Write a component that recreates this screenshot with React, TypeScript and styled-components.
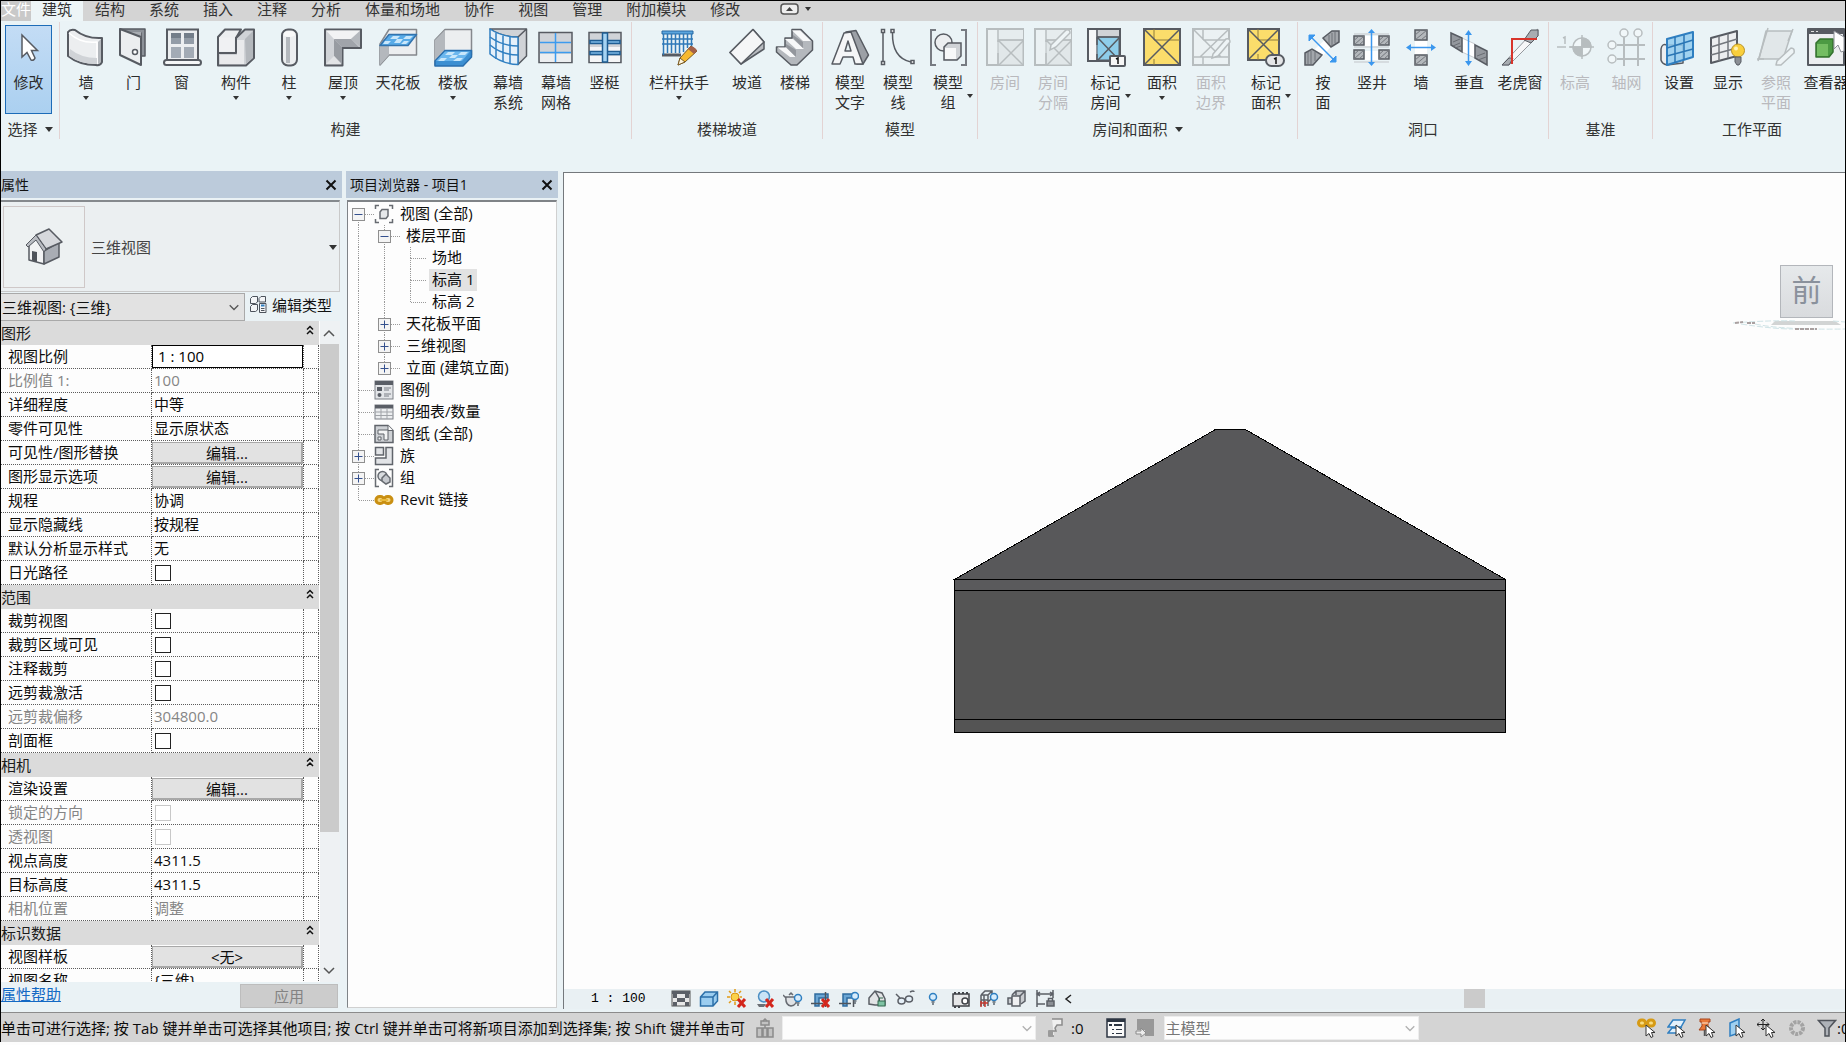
import React from "react";
import styled, { createGlobalStyle, css } from "styled-components";

const UI_FONT = `"Open Sans", "Noto Sans CJK SC", sans-serif`;

const Global = createGlobalStyle`
  *, *::before, *::after { box-sizing: border-box; }
  body { margin: 0; background: #fdfdfd; overflow: hidden; }
  body, button, input, select {
    font-family: ${UI_FONT};
    font-size: 15px;
    line-height: 20px;
  }
  button { cursor: default; white-space: nowrap; }
`;

const Frame = styled.div`
  display: flex;
  flex-direction: column;
  height: calc(100vh - 3px);
  border: 1px solid #000;
  border-bottom: 0;
  background: #eaf2f5;
  color: #1c1c1c;
  overflow: hidden;
`;

/* ---------- Tab strip ---------- */
const TabStrip = styled.nav`
  display: flex;
  flex: none;
  height: 20px;
  background: #d4d4d4;
`;

const Tab = styled.button<{ $kind?: "file" | "active" }>`
  flex: none;
  border: 0;
  padding: 0 ${(p) => (p.$kind ? 11 : 12)}px;
  background: ${(p) => (p.$kind === "active" ? "#edf5f7" : "transparent")};
  color: #333;
  line-height: 16px;
  display: flex;
  align-items: flex-start;
  ${(p) =>
    p.$kind === "file" &&
    css`
      width: 30px;
      padding: 0;
      justify-content: center;
      background: #c9c9c9;
      color: #fff;
    `}
`;

const RibbonToggle = styled.button`
  display: flex;
  align-items: center;
  gap: 6px;
  height: 16px;
  margin-left: 28px;
  padding: 0;
  border: 0;
  background: none;
`;

const Caret = styled.span<{ $size?: number; $color?: string }>`
  display: inline-block;
  width: 0;
  height: 0;
  border: ${(p) => p.$size ?? 3}px solid transparent;
  border-bottom-width: 0;
  border-top: ${(p) => (p.$size ?? 3) + 1}px solid ${(p) => p.$color ?? "#333"};
`;

/* ---------- Ribbon ---------- */
const Ribbon = styled.div`
  display: flex;
  flex: none;
  height: 150px;
  padding-top: 1px;
  background: #eaf3f6;
  overflow: hidden;
`;

const Panel = styled.section`
  display: flex;
  flex: none;
  flex-direction: column;
  height: 117px;
  border-right: 1px solid #e3d3d3;
`;

const PanelBody = styled.div`
  display: flex;
  height: 97px;
`;

const PanelTitle = styled.div`
  display: flex;
  align-items: center;
  justify-content: center;
  gap: 7px;
  height: 20px;
  color: #333;
`;

const Tool = styled.button<{ $w: number; $off?: boolean }>`
  display: flex;
  flex: none;
  flex-direction: column;
  align-items: center;
  width: ${(p) => p.$w}px;
  padding: 5px 0 0;
  border: 0;
  background: none;
  color: ${(p) => (p.$off ? "#b9b9bd" : "#2c2c2c")};
  > svg {
    flex: none;
    opacity: ${(p) => (p.$off ? 0.35 : 1)};
    filter: ${(p) => (p.$off ? "grayscale(1)" : "none")};
  }
`;

const ModifyTool = styled(Tool)`
  height: 89px;
  margin: 3px 7px 0 4px;
  padding-top: 1px;
  border: 1px solid #1d6cb8;
  background: linear-gradient(#c3dcf5, #abd0f0);
`;

const ToolLabel = styled.span`
  display: grid;
  grid-template-columns: 1fr auto 1fr;
  align-items: center;
  width: 100%;
  margin-top: 5px;
  white-space: pre;
  text-align: center;
  > i {
    grid-column: 3;
    justify-self: start;
    margin-left: 4px;
  }
  > span {
    grid-column: 2;
    justify-self: center;
  }
`;

const ToolCaret = styled(Caret)`
  margin-top: 4px;
`;

/* ---------- Workspace ---------- */
const Workspace = styled.main`
  display: flex;
  flex: 1;
  min-height: 0;
`;

const Palette = styled.aside<{ $w: number; $gap: number }>`
  display: flex;
  flex: none;
  flex-direction: column;
  width: ${(p) => p.$w}px;
  margin-right: ${(p) => p.$gap}px;
`;

const PaletteTitle = styled.header<{ $pad?: number }>`
  display: flex;
  flex: none;
  align-items: center;
  justify-content: space-between;
  height: 27px;
  margin-bottom: 2px;
  padding: 0 5px 0 ${(p) => p.$pad ?? 0}px;
  background: #bccbdb;
  font-size: 14px;
  color: #111;
`;

const CloseButton = styled.button`
  display: flex;
  padding: 0;
  border: 0;
  background: none;
`;

const TypeBox = styled.div`
  display: flex;
  flex: none;
  align-items: center;
  gap: 6px;
  height: 92px;
  margin-right: 2px;
  padding: 3px 2px 2px 2px;
  border-top: 2px solid #85898d;
  border-right: 1px solid #c9c9c9;
  border-bottom: 1px solid #c9c9c9;
  background: #ebeff1;
  color: #444;
  > span:nth-of-type(1) { flex: 1; }
`;

const TypePreview = styled.div`
  display: flex;
  align-items: center;
  justify-content: center;
  width: 82px;
  height: 82px;
  border: 1px solid #cfc8c8;
  background: #edf1f2;
`;

const InstanceRow = styled.div`
  display: flex;
  flex: none;
  align-items: center;
  gap: 5px;
  height: 29px;
`;

const SelectWrap = styled.label<{ $w: number; $h: number; $light?: boolean }>`
  position: relative;
  display: flex;
  align-items: center;
  flex: none;
  width: ${(p) => p.$w}px;
  height: ${(p) => p.$h}px;
  > svg { position: absolute; right: ${(p) => (p.$light ? 3 : 5)}px; pointer-events: none; }
`;

const Select = styled.select<{ $light?: boolean }>`
  appearance: none;
  width: 100%;
  height: 100%;
  padding: 0 24px 0 1px;
  border: 1px solid ${(p) => (p.$light ? "#ededed" : "#a9a9a9")};
  border-left-width: ${(p) => (p.$light ? 1 : 0)}px;
  border-radius: 0;
  background: ${(p) => (p.$light ? "#fdfdfd" : "#e2e2e2")};
  color: ${(p) => (p.$light ? "#777" : "#111")};
  opacity: 1;
`;

const EditType = styled.button`
  display: flex;
  align-items: center;
  gap: 5px;
  padding: 0 0 4px;
  border: 0;
  background: none;
  color: #111;
`;

const GridArea = styled.div`
  display: flex;
  flex: 1;
  min-height: 0;
  margin-right: 2px;
  overflow: hidden;
`;

const GridClip = styled.div`
  flex: 1;
  overflow: hidden;
`;

const PropTable = styled.table`
  width: 100%;
  border-collapse: separate;
  border-spacing: 0;
  table-layout: fixed;
  background: #fdfdfd;
`;

const GroupCell = styled.th`
  height: 24px;
  padding: 0;
  background: #dbdbdb;
  font-weight: 400;
  text-align: left;
  > div {
    display: flex;
    justify-content: space-between;
    padding-right: 3px;
  }
`;

const NameCell = styled.th<{ $off?: boolean }>`
  height: 24px;
  padding: 0 0 2px 7px;
  border-right: 1px dotted #5c5c5c;
  border-bottom: 1px dotted #5c5c5c;
  font-weight: 400;
  text-align: left;
  white-space: nowrap;
  color: ${(p) => (p.$off ? "#858585" : "#0c0c0c")};
`;

const ValueCell = styled.td<{ $off?: boolean; $flush?: boolean }>`
  height: 24px;
  padding: ${(p) => (p.$flush ? "0" : "0 0 2px 2px")};
  border-right: 1px dotted #5c5c5c;
  border-bottom: 1px dotted #5c5c5c;
  color: ${(p) => (p.$off ? "#858585" : "#0c0c0c")};
`;

const ScaleInput = styled.input`
  display: block;
  width: 100%;
  height: 23px;
  padding: 0 0 2px 5px;
  border: 1px solid #000;
  background: #fff;
`;

const CellButton = styled.button`
  display: block;
  width: 100%;
  height: 22px;
  margin-top: 1px;
  padding: 0;
  border: 1px solid #a8a8a8;
  border-width: 1px 2px 2px 1px;
  background: #e2e2e2;
  color: #0c0c0c;
  line-height: 18px;
`;

const Tick = styled.input`
  appearance: none;
  display: block;
  width: 16px;
  height: 16px;
  margin: 2px 1px 0;
  border: 1px solid #222;
  background: #fff;
  &:disabled { border-color: #c8c8c8; }
`;

const ScrollBar = styled.div`
  display: flex;
  flex: none;
  flex-direction: column;
  align-items: center;
  width: 21px;
  padding: 5px 2px 5px 0;
  border-left: 1px solid #fff;
  background: #eef1f3;
`;

const ScrollThumb = styled.div`
  flex: none;
  width: 19px;
  height: 75%;
  margin: 4px 0 auto;
  background: #cbcbcb;
`;

const PaletteFooter = styled.footer`
  display: flex;
  flex: none;
  align-items: flex-start;
  justify-content: space-between;
  height: 30px;
  padding: 2px 4px 0 0;
`;

const HelpLink = styled.a`
  color: #1469c4;
`;

const ApplyButton = styled.button`
  width: 98px;
  height: 24px;
  padding: 0;
  border: 1px solid #bdbdbd;
  background: #cccccc;
  color: #838383;
`;

/* ---------- Project browser ---------- */
const TreeBox = styled.ul`
  flex: 1;
  margin: 0 1px 4px;
  padding: 1px 0 0;
  border: 1px solid #d0d0d0;
  border-top: 2px solid #7f8387;
  border-left: 1px solid #7f8387;
  background: #fdfdfd;
  list-style: none;
`;

const TreeRow = styled.li`
  display: flex;
  align-items: center;
  height: 22px;
  color: #0c0c0c;
  > svg { flex: none; }
`;

const TreeLabel = styled.span<{ $sel?: boolean }>`
  height: 22px;
  margin-left: 3px;
  padding: 0 3px;
  background: ${(p) => (p.$sel ? "#e2e2e2" : "transparent")};
  white-space: nowrap;
`;

/* ---------- Drawing view ---------- */
const View = styled.section`
  display: flex;
  flex: 1;
  flex-direction: column;
  min-width: 0;
  margin: 1px 0 3px;
  border-top: 1px solid #74787c;
  border-left: 1px solid #74787c;
`;

const Canvas = styled.div`
  position: relative;
  flex: 1;
  min-height: 0;
  background: #fdfdfd;
  > svg { display: block; width: 100%; height: 100%; }
`;

const ViewCube = styled.div`
  position: absolute;
  top: 92px;
  right: 0;
  width: 112px;
  overflow: hidden;
`;

const CubeFace = styled.button`
  display: block;
  width: 53px;
  height: 53px;
  margin: 0 0 0 47px;
  padding: 0 0 4px;
  border: 1px solid #b3b6bb;
  background: linear-gradient(#e6e9eb, #d9dbde);
  color: #8a919c;
  font-size: 30px;
  line-height: 44px;
`;

const ViewBar = styled.div`
  display: flex;
  flex: none;
  align-items: center;
  gap: 8px;
  height: 20px;
  padding-left: 27px;
  background: #e9f0f3;
`;

const ScaleText = styled.button`
  width: 72px;
  padding: 0;
  border: 0;
  background: none;
  font-family: "Liberation Mono", monospace;
  font-size: 13px;
  text-align: left;
`;

const BarButton = styled.button`
  display: flex;
  flex: none;
  padding: 0;
  border: 0;
  background: none;
`;

const HTrack = styled.div`
  flex: 1;
  align-self: stretch;
`;

const HThumb = styled.div`
  width: 21px;
  height: 19px;
  margin-left: 50%;
  background: #cbcbcb;
`;

/* ---------- Status bar ---------- */
const StatusBar = styled.footer`
  display: flex;
  flex: none;
  align-items: center;
  height: 30px;
  border-top: 1px solid #8b8b8b;
  background: #d4d4d4;
  color: #0c0c0c;
  overflow: hidden;
`;

const StatusText = styled.span`
  flex: none;
  width: 754px;
  overflow: hidden;
  white-space: nowrap;
`;

const StatusGroup = styled.div<{ $ml: number; $gap: number }>`
  display: flex;
  flex: none;
  align-items: center;
  gap: ${(p) => p.$gap}px;
  margin-left: ${(p) => p.$ml}px;
`;

const StatusRight = styled.div`
  display: flex;
  flex: none;
  align-items: center;
  width: 208px;
  margin-left: auto;
  white-space: nowrap;
`;

/* ---------- Ribbon drawings, 40 × 40 ---------- */
const S = "#575b62";
const L = "#eceef0";
const M = "#d0d3d7";
const D = "#b4b8bd";
const B = "#2f7fc1";

const hatch = (x: number, y: number, w: number, h: number) => (
  <g>
    <rect x={x} y={y} width={w} height={h} fill="#b4b8bc" stroke={S} strokeWidth="1.500" />
    <path
      d={`M${x} ${y + h / 2}L${x + w / 2} ${y}M${x} ${y + h}L${x + w} ${y}M${x + w / 2} ${y + h}L${x + w} ${y + h / 2}`}
      stroke="#74787e"
      fill="none"
    />
  </g>
);

const roomPlan = (
  <g fill="none" stroke={S}>
    <rect x="2" y="2" width="36" height="36" fill={L} strokeWidth="2" />
    <path d="M13 13H38V38H13z" fill={M} />
    <path d="M2 3H38V12H14V3z" fill="#dfe1e4" stroke="none" />
    <path d="M13 2V15M13 26V38M13 13H38M14 14L38 38M38 14L14 38" strokeWidth="1.5" />
  </g>
);

const areaPlan = (x2: number) => (
  <g fill="none" stroke={S}>
    <rect x="2" y="2" width={x2 - 2} height={x2 - 2} fill="#fbdd6b" strokeWidth="2" />
    <path d={`M12 2V13M12 13H${x2}M12 ${x2 - 6}V${x2}`} stroke="#8f7d3c" />
    <path d={`M3 3L${x2 - 1} ${x2 - 1}M${x2 - 1} 3L3 ${x2 - 1}`} strokeWidth="1.5" />
  </g>
);

const greyPencil = (
  <path d="M18 18L33 3Q37 2 37 6L23 20L17 23z" fill="#f6f6f6" stroke={S} strokeWidth="1.5" />
);

const toolArt: Record<string, React.ReactNode> = {
  modify: (
    <path d="M13 8V30L18 25.500L22 33Q25 34 26 31L22.500 23.500H28.500z" fill="#fff" stroke={S} strokeWidth="1.500" />
  ),
  wall: (
    <g stroke={S} strokeWidth="2" strokeLinejoin="round">
      <path d="M2 5Q4 2 9 3Q20 12 36 11V35Q34 39 30 38Q13 38 2 29z" fill={L} />
      <path d="M3 6Q15 17 31 15V37" fill="none" stroke="#fff" strokeWidth="1.500" />
      <path d="M32 15L35 12V35L32 37z" fill={D} stroke="none" />
      <path d="M4 22Q15 31 31 31V37Q14 37 3 29z" fill={M} stroke="none" />
    </g>
  ),
  door: (
    <g stroke={S} strokeWidth="1.500" strokeLinejoin="round">
      <path d="M6 2H31V29H27V6H14z" fill="#8c9198" />
      <path d="M14 5H27V29H14z" fill="#a9adb3" stroke="none" />
      <path d="M6 2L27 10V38L6 28z" fill={L} strokeWidth="2" />
      <circle cx="21" cy="25" r="2.500" fill="#fff" />
    </g>
  ),
  window: (
    <g stroke={S}>
      <rect x="5" y="2.500" width="31" height="31" fill={L} strokeWidth="2" />
      <path d="M9 6H19V17H9zM22 6H32V17H22z" fill="#747e8a" stroke="none" />
      <path d="M9 20H19V31H9zM22 20H32V31H22z" fill="#a3abb5" stroke="none" />
      <path d="M9 11H19V17H9zM22 11H32V17H22z" fill="#939ca7" stroke="none" />
      <rect x="2" y="33" width="37" height="5" rx="2.500" fill="#f5f6f7" strokeWidth="2" />
    </g>
  ),
  component: (
    <g stroke={S} strokeWidth="2" strokeLinejoin="round">
      <path d="M2 10L9 2.500H25L20 11V26H2z" fill={L} />
      <path d="M2 26H20V11L29 2.500H38V31L30 38.500H2z" fill={M} />
      <path d="M3 10.500H18V24H3z" fill="#f0f1f3" stroke="none" />
      <path d="M29 12L37 4V31L30 37z" fill={D} stroke="none" />
      <path d="M21 13H28V37H4V28H21z" fill="#e9eaec" stroke="none" />
    </g>
  ),
  column: (
    <g>
      <rect x="13" y="2.500" width="15" height="36" rx="6" fill={L} stroke={S} strokeWidth="2" />
      <path d="M19 10V36" stroke={D} strokeWidth="4" />
      <ellipse cx="20.500" cy="7" rx="6" ry="3" fill="#f9f9f9" />
    </g>
  ),
  roof: (
    <g stroke={S} strokeWidth="2" strokeLinejoin="round">
      <path d="M2 2.500H38V21H19.500V38.500H2z" fill={M} />
      <g stroke="none">
        <path d="M3 3.500H37L28 12H11z" fill="#f2f3f4" />
        <path d="M37 4V20L28 12z" fill={D} />
        <path d="M11 12H28L36 20H19z" fill="#a0a4aa" />
        <path d="M11 12L19 20V37L11 29z" fill="#989ca2" />
        <path d="M3 37L11 29L18 37z" fill="#e2e4e6" />
      </g>
    </g>
  ),
  ceiling: (
    <g strokeLinejoin="round">
      <path d="M2 17L11 2.500H38.500V28H11L2 38z" fill={L} stroke="#85888d" strokeWidth="1.500" />
      <path d="M2 17L11 8V28L2 38z" fill={D} />
      <path d="M11 7.500H38.500L30 18.500H2z" fill="#58abe8" stroke="#3373ad" strokeWidth="1.500" />
      <path d="M15 9H22L19 12H12zM28 9H35L32 12H25zM19 12H25L22 16H16zM7 14H13L10 17H5zM26 14H31L28 17H23z" fill="#c9e7fb" />
    </g>
  ),
  floor: (
    <g strokeLinejoin="round">
      <path d="M2 13L12 2.500H38.500V28H12L2 38z" fill={L} stroke="#85888d" strokeWidth="1.500" />
      <path d="M2 13L12 3V26L2 36z" fill={D} />
      <path d="M12 23.500H38.500V30L30 39H2V34z" fill="#3c8fd2" stroke="#2a6fae" strokeWidth="1.500" />
      <path d="M12 24.500H37L29 34H3z" fill="#6cb7ee" />
      <path d="M15 25H22L19 28H12zM28 25H35L32 28H25zM19 28H25L22 31H16zM8 31H14L11 34H5zM24 31H30L27 34H20z" fill="#c9e7fb" />
    </g>
  ),
  curtainSystem: (
    <g fill="none" strokeLinejoin="round">
      <path d="M2 2H38.500V29L30 37.500V10Q14 10 2 2z" fill={M} stroke={S} strokeWidth="1.500" />
      <path d="M2 2Q14 10 30 10V37.500Q14 37 2 27z" fill="#e4f0fa" stroke={B} strokeWidth="1.500" />
      <path d="M2 10Q14 19 30 19M2 18Q14 28 30 28M8 6V32M15 8.500V35M22 10V37" stroke={B} strokeWidth="1.500" />
      <path d="M30 10L38.500 2" stroke={S} strokeWidth="1.500" />
    </g>
  ),
  curtainGrid: (
    <g>
      <rect x="3" y="5.500" width="33" height="30" fill={M} stroke={S} strokeWidth="1.500" />
      <path d="M4 27H35V35H4z" fill="#eceef0" />
      <path d="M19.500 6V35M4 15.500H35M4 25.500H35" stroke="#3c9bee" strokeWidth="1.500" />
    </g>
  ),
  mullion: (
    <g>
      <rect x="4" y="5.500" width="32" height="30" fill={M} stroke={S} strokeWidth="1.500" />
      <path d="M5 20H35V24H5zM5 29H35V35H5z" fill="#f5f6f7" />
      <path d="M5 13.500H35V16.500H5zM5 24.500H35V27.500H5z" fill="#7db9e4" stroke="#1f5e93" strokeWidth="1.500" />
      <path d="M17.500 6H22.500V35H17.500z" fill="#a6d4f3" stroke="#1f5e93" strokeWidth="1.500" />
    </g>
  ),
  railing: (
    <g>
      <path d="M3 4H34V7H3z" fill="#5aa5de" stroke="#2668a3" />
      <path d="M3 28H22" stroke={S} strokeWidth="3" />
      <path d="M3 12H34M3 17H34M4.500 7V28M8.500 7V26M12.500 7V26M16.500 7V26M20.500 7V26M24.500 7V25M28.500 7V21M32.500 7V20" stroke="#2f79b8" strokeWidth="1.500" />
      <path d="M19 38L21 31L32 19L38 24L26 35z" fill="#f6b92f" stroke="#7a5a22" strokeLinejoin="round" />
      <path d="M32 19L34.500 20Q38 22 38 24L35 27L29 22z" fill="#a3614a" />
      <path d="M19 38L21 31L26 35z" fill="#fff5dd" stroke="#7a5a22" />
    </g>
  ),
  ramp: (
    <g stroke={S} strokeWidth="1.500" strokeLinejoin="round">
      <path d="M26 2.500L37 15V22L14 37L3 25.500z" fill="#b9bcc1" />
      <path d="M26 2.500L37 15L14 37L3 25.500z" fill="#f5f6f7" />
    </g>
  ),
  stairs: (
    <g stroke={S} strokeWidth="1.500" strokeLinejoin="round">
      <path d="M17 2.500H26L37.500 14V23L22 38H16L1.500 25V20H10V11H17z" fill={D} />
      <path d="M17 3.500H25L36 14H28zM10 12H18L29 22H21zM2.500 20.500H11L21 30H15z" fill="#f7f8f9" stroke="none" />
      <path d="M18 8L28 15V21L18 11zM11 17L21 23V30L11 20z" fill="#93979d" stroke="none" />
    </g>
  ),
  modelText: (
    <g stroke={S} strokeWidth="1.500" strokeLinejoin="round">
      <path d="M16 5L26 3.500L38.500 28L33 37H27z" fill="#9ca0a6" />
      <path d="M2 37L14 6L21 5L33 37H25L23 30H13L10 37zM15 24H21L18 14z" fill="#f5f6f7" fillRule="evenodd" />
    </g>
  ),
  modelLine: (
    <g fill="none" stroke={S} strokeWidth="1.500">
      <path d="M5 6V34M14.500 6Q14 31 33 35" />
      <path d="M3.500 2.500H6.500V5.500H3.500zM3.500 34.500H6.500V37.500H3.500zM13 2.500H16V5.500H13zM33 33.500H36V36.500H33z" fill="#fff" />
    </g>
  ),
  modelGroup: (
    <g fill="none" stroke={S} strokeWidth="1.500">
      <path d="M8 3H3V38H8M33 3H38V38H33" stroke="#777b82" strokeWidth="2" />
      <circle cx="15.500" cy="15.500" r="8.500" fill={L} />
      <path d="M16 20L20 16H33V29L29 33H16z" fill={M} />
      <path d="M17 21H28V32H17z" fill="#f7f8f9" stroke="none" />
    </g>
  ),
  room: roomPlan,
  roomSep: (
    <g>
      {roomPlan}
      {greyPencil}
    </g>
  ),
  tagRoom: (
    <g stroke={S} fill="none">
      <rect x="2" y="2" width="32" height="32" fill={M} strokeWidth="2" />
      <path d="M3 3H10V33H3z" fill="#f5f6f7" stroke="none" />
      <path d="M11 10H33V33H11z" fill="#8ecdea" />
      <path d="M11 2V18M11 27V34M11 10H34M12 11L33 33M33 11L12 33" strokeWidth="1.500" />
      <rect x="24" y="29" width="15" height="10" rx="1" fill="#f6f6f6" strokeWidth="2" />
      <path d="M30 32L32 31V37" stroke="#111" strokeWidth="1.500" />
    </g>
  ),
  area: areaPlan(38),
  areaBound: (
    <g>
      <g fill="none" stroke={S}>
        <rect x="2" y="2" width="36" height="36" fill={L} strokeWidth="2" />
        <path d="M12 2V13M12 13H38M2 30H38M3 3L30 30M37 3L9 30M12 30V38" strokeWidth="1.500" />
      </g>
      <path d="M22 27L35 12Q39 11 39 15L27 29L21 31z" fill="#f6f6f6" stroke={S} strokeWidth="1.500" />
    </g>
  ),
  tagArea: (
    <g>
      {areaPlan(33)}
      <rect x="20" y="28" width="18" height="11" rx="5.500" fill="#e4e5e7" stroke={S} strokeWidth="2" />
      <path d="M28 32L30 31V37" stroke="#111" strokeWidth="1.500" fill="none" />
    </g>
  ),
  byFace: (
    <g>
      <path d="M12 22L26 9L31 16L19 30z" fill="#fff" />
      <path d="M20 11L29 4H36V15L28 20z" fill="#a3a7ac" stroke={S} strokeWidth="1.500" />
      <path d="M2 26L9 22L19 28L10 38H2z" fill="#a3a7ac" stroke={S} strokeWidth="1.500" />
      <path d="M26 8V17M29 6V19M32 5V16M5 25V37M8 24V37M12 25V34" stroke="#6f7379" />
      <path d="M8 10L31 33" stroke="#3b97ee" strokeWidth="1.500" />
      <path d="M6 8H12L6 14zM33 35V29L27 35z" fill="#3b97ee" stroke="#3b97ee" />
    </g>
  ),
  shaft: (
    <g>
      <path d="M12 9H28V19H12zM12 24H28V33H12z" fill="#fff" />
      {hatch(2, 9, 10, 9)}
      {hatch(27, 9, 10, 9)}
      {hatch(2, 23, 10, 9)}
      {hatch(27, 23, 10, 9)}
      <path d="M2 7H37M2 20H37M2 35H37" stroke="#c2c5c9" />
      <path d="M19.500 5V36" stroke="#3b97ee" strokeWidth="1.500" />
      <path d="M19.500 2L23 6H16zM19.500 39L23 35H16z" fill="#3b97ee" />
    </g>
  ),
  wallOpening: (
    <g>
      <path d="M14 14H26V27H14z" fill="#fff" />
      {hatch(14, 3, 12, 10)}
      {hatch(14, 28, 12, 10)}
      <path d="M8 20.500H32" stroke="#3b97ee" strokeWidth="1.500" />
      <path d="M5 20.500L10 17V24zM35 20.500L30 17V24z" fill="#3b97ee" />
    </g>
  ),
  vertical: (
    <g>
      <path d="M13 11L26 17V31L13 25z" fill="#fff" stroke="#c9ccd0" />
      <path d="M2 6L13 11V25L2 18zM26 18L38 24V38L26 31z" fill="#94989e" stroke={S} strokeWidth="1.500" />
      <path d="M4 15L11 12M4 19L11 16M6 21L12 19M28 29L36 26M29 33L37 30" stroke="#686c72" />
      <path d="M19.500 6V36" stroke="#3b97ee" strokeWidth="1.500" />
      <path d="M19.500 3L23 8H16zM19.500 39L23 34H16z" fill="#3b97ee" />
    </g>
  ),
  dormer: (
    <g fill="none">
      <path d="M2 38L30 8L38 2V9L9 38z" fill="#f6f7f8" stroke="#94989d" />
      <path d="M24 13L31 3H38V9L31 16zM2 38L9 31H13L9 38z" fill="#a8acb1" stroke={S} />
      <path d="M12 37V12H37" stroke="#d8342b" strokeWidth="2" />
    </g>
  ),
  level: (
    <g stroke={S} fill="none" strokeWidth="1.500">
      <path d="M2 20H11M8 11L10 10V17M14 20H20" />
      <circle cx="27" cy="20" r="9" fill="#fff" />
      <path d="M27 11A9 9 0 0 1 36 20H27zM27 29A9 9 0 0 1 18 20H27z" fill={S} />
      <path d="M27 8V32M15 20H39" />
    </g>
  ),
  grid: (
    <g stroke={S} fill="none" strokeWidth="2">
      <path d="M17 10V39M31 10V39M10 18H38M10 32H38" />
      <g fill="#fff" strokeWidth="1.500">
        <circle cx="17" cy="6" r="4" />
        <circle cx="31" cy="6" r="4" />
        <circle cx="5" cy="18" r="4" />
        <circle cx="5" cy="32" r="4" />
      </g>
    </g>
  ),
  setPlane: (
    <g strokeLinejoin="round">
      <path d="M2 22Q3 16 8 18H24V36L8 38Q3 37 2 33z" fill={L} stroke={S} strokeWidth="1.500" />
      <path d="M8 12L34 5V30L8 38z" fill="#93cbee" fillOpacity="0.850" stroke={B} strokeWidth="2" />
      <path d="M8 21L34 13M8 29L34 22M16 10V36M25 8V33" stroke="#2a76b5" strokeWidth="1.500" />
    </g>
  ),
  showPlane: (
    <g strokeLinejoin="round">
      <path d="M3 11L29 4V29L3 36z" fill={L} stroke={S} strokeWidth="2" />
      <path d="M3 20L29 12M3 28L29 21M11 9V34M20 7V31" stroke="#74787e" strokeWidth="1.500" />
      <circle cx="30" cy="23.500" r="6.500" fill="#f9cf3c" stroke="#bb9324" />
      <circle cx="28" cy="21.500" r="2" fill="#fff2b5" />
      <path d="M27 30H33V35L31 38H29L27 35z" fill="#8b8f95" stroke={S} />
    </g>
  ),
  refPlane: (
    <g strokeLinejoin="round" fill="none" stroke={S} strokeWidth="1.500">
      <path d="M10 4H36L27 32H3z" fill={M} />
      <path d="M12 1L2 34M37 2L32 14M1 32H8" />
      <path d="M21 34L35 21Q39 21 38 26L25 38L20 38z" fill="#f6f6f6" />
    </g>
  ),
  viewer: (
    <g strokeLinejoin="round">
      <rect x="2" y="2" width="36" height="36" fill={L} stroke={S} strokeWidth="2" />
      <path d="M2 2H38V7H2z" fill={S} />
      <path d="M5 4.500H8M10 4.500H12" stroke="#e0e0e0" />
      <path d="M10 16L14 12H27V25L23 30H10z" fill="#4c9a43" stroke="#34722e" strokeWidth="1.500" />
      <path d="M11 17H22V29H11z" fill="#74bd62" />
      <path d="M28 4V22L32 18L35 25L38 24V10z" fill="#fff" stroke="#8b8f95" />
    </g>
  ),
};

const Art = ({ size, children }: { size: number; children: React.ReactNode }) => (
  <svg width={size} height={size} viewBox={`0 0 ${size} ${size}`} fill="none" aria-hidden="true">
    {children}
  </svg>
);

type ToolDef = [art: string, label: string, width: number, caret?: "below" | "side", off?: boolean];

const panels: { title: string; menu?: boolean; tools: ToolDef[] }[] = [
  {
    title: "构建",
    tools: [
      ["wall", "墙", 52, "below"],
      ["door", "门", 43],
      ["window", "窗", 53],
      ["component", "构件", 56, "below"],
      ["column", "柱", 50, "below"],
      ["roof", "屋顶", 58, "below"],
      ["ceiling", "天花板", 52],
      ["floor", "楼板", 58, "below"],
      ["curtainSystem", "幕墙\n系统", 52],
      ["curtainGrid", "幕墙\n网格", 44],
      ["mullion", "竖梃", 53],
    ],
  },
  {
    title: "楼梯坡道",
    tools: [
      ["railing", "栏杆扶手", 94, "below"],
      ["ramp", "坡道", 42],
      ["stairs", "楼梯", 54],
    ],
  },
  {
    title: "模型",
    tools: [
      ["modelText", "模型\n文字", 54],
      ["modelLine", "模型\n线", 42],
      ["modelGroup", "模型\n组", 58, "side"],
    ],
  },
  {
    title: "房间和面积",
    menu: true,
    tools: [
      ["room", "房间", 54, undefined, true],
      ["roomSep", "房间\n分隔", 42, undefined, true],
      ["tagRoom", "标记\n房间", 63, "side"],
      ["area", "面积", 50, "below"],
      ["areaBound", "面积\n边界", 48, undefined, true],
      ["tagArea", "标记\n面积", 62, "side"],
    ],
  },
  {
    title: "洞口",
    tools: [
      ["byFace", "按\n面", 50],
      ["shaft", "竖井", 48],
      ["wallOpening", "墙", 50],
      ["vertical", "垂直", 46],
      ["dormer", "老虎窗", 56],
    ],
  },
  {
    title: "基准",
    tools: [
      ["level", "标高", 52, undefined, true],
      ["grid", "轴网", 51, undefined, true],
    ],
  },
  {
    title: "工作平面",
    tools: [
      ["setPlane", "设置", 52],
      ["showPlane", "显示", 46],
      ["refPlane", "参照\n平面", 50, undefined, true],
      ["viewer", "查看器", 50],
    ],
  },
];

const RibbonTool = ({ def: [art, label, w, caret, off] }: { def: ToolDef }) => (
  <Tool $w={w} $off={off} disabled={off}>
    <Art size={40}>{toolArt[art]}</Art>
    <ToolLabel>
      <span>{label}</span>
      {caret === "side" && (
        <i>
          <Caret as="b" />
        </i>
      )}
    </ToolLabel>
    {caret === "below" && <ToolCaret />}
  </Tool>
);

/* ---------- Properties ---------- */
type Prop = { name: string; value?: string; kind?: "input" | "button" | "tick"; off?: boolean };

const groups: { title: string; rows: Prop[] }[] = [
  {
    title: "图形",
    rows: [
      { name: "视图比例", value: "1 : 100", kind: "input" },
      { name: "比例值 1:", value: "100", off: true },
      { name: "详细程度", value: "中等" },
      { name: "零件可见性", value: "显示原状态" },
      { name: "可见性/图形替换", value: "编辑...", kind: "button" },
      { name: "图形显示选项", value: "编辑...", kind: "button" },
      { name: "规程", value: "协调" },
      { name: "显示隐藏线", value: "按规程" },
      { name: "默认分析显示样式", value: "无" },
      { name: "日光路径", kind: "tick" },
    ],
  },
  {
    title: "范围",
    rows: [
      { name: "裁剪视图", kind: "tick" },
      { name: "裁剪区域可见", kind: "tick" },
      { name: "注释裁剪", kind: "tick" },
      { name: "远剪裁激活", kind: "tick" },
      { name: "远剪裁偏移", value: "304800.0", off: true },
      { name: "剖面框", kind: "tick" },
    ],
  },
  {
    title: "相机",
    rows: [
      { name: "渲染设置", value: "编辑...", kind: "button" },
      { name: "锁定的方向", kind: "tick", off: true },
      { name: "透视图", kind: "tick", off: true },
      { name: "视点高度", value: "4311.5" },
      { name: "目标高度", value: "4311.5" },
      { name: "相机位置", value: "调整", off: true },
    ],
  },
  {
    title: "标识数据",
    rows: [
      { name: "视图样板", value: "<无>", kind: "button" },
      { name: "视图名称", value: "{三维}" },
    ],
  },
];

const PropertyRow = ({ row, id }: { row: Prop; id: string }) => (
  <tr>
    <NameCell scope="row" $off={row.off}>
      {row.kind ? <label htmlFor={id}>{row.name}</label> : row.name}
    </NameCell>
    <ValueCell $off={row.off} $flush={row.kind === "input" || row.kind === "button"}>
      {row.kind === "input" && <ScaleInput id={id} defaultValue={row.value} />}
      {row.kind === "button" && <CellButton id={id}>{row.value}</CellButton>}
      {row.kind === "tick" && <Tick id={id} type="checkbox" disabled={row.off} />}
      {!row.kind && row.value}
    </ValueCell>
    <ValueCell />
  </tr>
);

const Collapse = () => (
  <svg width="12" height="16" viewBox="0 0 12 16" fill="none" stroke="#111" strokeWidth="1.500" aria-hidden="true">
    <path d="M3 6.500L6 3.500L9 6.500M3 11L6 8L9 11" />
  </svg>
);

const Chevron = ({ up, color = "#555", size = 14 }: { up?: boolean; color?: string; size?: number }) => (
  <svg width={size} height={size} viewBox="0 0 14 14" fill="none" stroke={color} strokeWidth="1.500" aria-hidden="true">
    <path d={up ? "M2 10L7 5L12 10" : "M2 5L7 10L12 5"} />
  </svg>
);

const CloseX = () => (
  <svg width="12" height="12" viewBox="0 0 12 12" stroke="#111" strokeWidth="2" aria-hidden="true">
    <path d="M1.500 1.500L10.500 10.500M10.500 1.500L1.500 10.500" />
  </svg>
);

const House = () => (
  <svg width="40" height="40" viewBox="0 0 40 40" stroke={S} strokeLinejoin="round" aria-hidden="true">
    <path d="M5 18L14 10L20 24V37L5 33z" fill="#f2f3f4" strokeWidth="1.500" />
    <path d="M20 24L35 15V30L20 37z" fill="#a9adb4" strokeWidth="1.500" />
    <path d="M12 8L25 2L38 15L22 22z" fill="#d6d8dc" strokeWidth="1.500" />
    <path d="M12 8L22 22L20 25L12 13L4 20L2 18z" fill="#b9bcc2" />
    <path d="M8 24L13 25V35L8 33.500z" fill="#50545b" stroke="none" />
  </svg>
);

const TypeIcon = () => (
  <svg width="17" height="17" viewBox="0 0 17 17" fill="#f3f5f7" stroke="#4d535c" aria-hidden="true">
    <path d="M.5 2.500L2.500.5H7.500V6L5.500 7.500H.5zM9 2.500L11 .5H15.500V6H9zM.5 10.500L2.500 8.500H7.500V14L5.500 15.500H.5z" />
    <path d="M9.500 7.500H16V16.500H9.500z" />
    <path d="M11 9.500H14.500" stroke="#2f7fc1" strokeWidth="2" />
    <path d="M11 12.500H14.500M11 14.500H14.500" />
  </svg>
);

/* ---------- Browser tree ---------- */
type Guide = "line" | "tee" | "end" | "plus" | "minus" | "minusTop" | "plusEnd";

const GuideCell = ({ kind }: { kind: Guide }) => {
  const box = kind.startsWith("plus") || kind.startsWith("minus");
  const up = kind !== "minusTop";
  const down = kind !== "end" && kind !== "plusEnd";
  return (
    <svg width="26" height="22" viewBox="0 0 26 22" fill="none" aria-hidden="true">
      <g stroke="#9a9a9a" strokeDasharray="1 1">
        {up && <path d="M10.500 0V11" />}
        {down && <path d="M10.500 11V22" />}
        {kind !== "line" && <path d="M11 11.500H26" />}
      </g>
      {box && (
        <g>
          <rect x="4.500" y="5.500" width="12" height="12" fill="#f4f4f4" stroke="#8f8f8f" />
          <path d={kind.startsWith("plus") ? "M6.500 11.500H14.500M10.500 7.500V15.500" : "M6.500 11.500H14.500"} stroke="#34508e" />
        </g>
      )}
    </svg>
  );
};

/* Keeps the column of a closed branch empty. */
const GuideGap = styled.span`
  flex: none;
  width: 26px;
`;

const treeArt: Record<string, React.ReactNode> = {
  views: (
    <g stroke="#676b71" strokeWidth="1.500">
      <path d="M5 1.500H1.500V5M15 1.500H18.500V5M5 18.500H1.500V15M15 18.500H18.500V15" />
      <path d="M6 8L8 5.500H14V12L12 14.500H6z" fill="#e6e8ea" />
    </g>
  ),
  legend: (
    <g>
      <rect x="1" y="1" width="18" height="18" fill="#e3e5e8" stroke="#7b7f86" />
      <path d="M1 1H19V5H1z" fill="#5a5e66" />
      <path d="M3 7H8V11H3z" fill="#5a5e66" />
      <circle cx="5.500" cy="15" r="2" fill="#5a5e66" />
      <path d="M10 8H17M10 10H15M10 14H17M10 16H15" stroke="#7b7f86" />
    </g>
  ),
  schedule: (
    <g>
      <rect x="1" y="3" width="18" height="14" fill="#eceef0" stroke="#7b7f86" />
      <path d="M1 3H19V6.500H1z" fill="#5a5e66" />
      <path d="M1 10H19M1 13.500H19M7 6V17M13 6V17" stroke="#a0a3a8" />
    </g>
  ),
  sheet: (
    <g stroke="#60646b">
      <path d="M1 1.500H14L19 6.500V18.500H1z" fill="#ced1d5" strokeWidth="1.500" />
      <path d="M14 1.500V6.500H19" fill="#fff" />
      <path d="M4 6H14V16H10V10H4zM4 13H7V16H4z" fill="#f3f4f5" />
    </g>
  ),
  family: (
    <g stroke="#60646b" strokeWidth="1.500">
      <path d="M1.500 1.500H9.500V9H1.500zM12 1.500H18.500V18.500H1.500V12H12z" fill="#e2e4e7" />
    </g>
  ),
  group: (
    <g stroke="#676b71" strokeWidth="1.500">
      <path d="M5 1.500H1.500V18.500H5M15 1.500H18.500V18.500H15" />
      <circle cx="8.500" cy="8" r="4.500" fill="#d9dcdf" />
      <path d="M8 10L12 6L16 10V14L12 16L8 13z" fill="#c6c9ce" />
    </g>
  ),
  link: (
    <g stroke="#c98f12" strokeWidth="3">
      <rect x="2" y="6.500" width="8" height="7" rx="3.500" fill="#f5d57d" />
      <rect x="10" y="6.500" width="8" height="7" rx="3.500" fill="#f5d57d" />
      <path d="M6 10H14" stroke="#e9b93a" strokeWidth="2" />
    </g>
  ),
};

const treeRows: { guides: (Guide | "")[]; art?: string; text: string; sel?: boolean }[] = [
  { guides: ["minusTop"], art: "views", text: "视图 (全部)" },
  { guides: ["line", "minus"], text: "楼层平面" },
  { guides: ["line", "line", "tee"], text: "场地" },
  { guides: ["line", "line", "tee"], text: "标高 1", sel: true },
  { guides: ["line", "line", "end"], text: "标高 2" },
  { guides: ["line", "plus"], text: "天花板平面" },
  { guides: ["line", "plus"], text: "三维视图" },
  { guides: ["line", "plusEnd"], text: "立面 (建筑立面)" },
  { guides: ["tee"], art: "legend", text: "图例" },
  { guides: ["tee"], art: "schedule", text: "明细表/数量" },
  { guides: ["tee"], art: "sheet", text: "图纸 (全部)" },
  { guides: ["plus"], art: "family", text: "族" },
  { guides: ["plus"], art: "group", text: "组" },
  { guides: ["end"], art: "link", text: "Revit 链接" },
];

/* ---------- View control bar drawings, 20 × 20 ---------- */
const redX = <path d="M11 10L18 18M18 10L11 18" stroke="#d3261c" strokeWidth="3" />;
const bulb = (x: number, y: number) => (
  <g>
    <circle cx={x} cy={y} r="3.500" fill="#d8ecfb" stroke="#2f7fc1" strokeWidth="1.500" />
    <path d={`M${x - 1.500} ${y + 5}H${x + 1.500}M${x - 1} ${y + 7}H${x + 1}`} stroke="#5b6570" strokeWidth="1.500" />
  </g>
);
const cropMark = (
  <g>
    <path d="M4 17V5H17V9H8V17z" fill="#6ba6d4" stroke="#2f6b9f" strokeWidth="1.500" />
    <path d="M0 14.500H12M14.500 3V18" stroke="#4f545b" strokeWidth="1.500" />
  </g>
);

const barArt: [string, React.ReactNode][] = [
  ["详细程度", (
    <g>
      <rect x="1" y="2" width="18" height="15" fill="#e8e8e8" stroke="#555" />
      <path d="M1 2H19V5H1zM2 5H6V9H2zM14 5H18V9H14zM6 9H14V13H6zM2 13H6V17H2zM14 13H18V17H14z" fill="#5b5f66" />
    </g>
  )],
  ["视觉样式", (
    <path d="M1.500 8L6 3H18.500V12L14 17H1.500zM1.500 8H14V17M14 8L18.500 3" fill="#9bcdf0" stroke="#2c6fa8" strokeWidth="1.500" />
  )],
  ["日光路径", (
    <g>
      <circle cx="8" cy="8" r="4" fill="#fbd24b" stroke="#d99413" />
      <path d="M8 0V3M8 13V16M0 8H3M2 2L4 4M14 2L12 4M2 14L4 12M13 8H15" stroke="#e29b16" strokeWidth="1.500" />
      {redX}
    </g>
  )],
  ["阴影", (
    <g>
      <circle cx="9" cy="7.500" r="5.500" fill="#c9e3f6" stroke="#4c8fc4" strokeWidth="1.500" />
      <path d="M2 15H11L9 18H4z" fill="#6b6f75" />
      {redX}
    </g>
  )],
  ["渲染", (
    <g>
      <path d="M3 8H13Q15 16 8 17Q2 16 3 8zM3 9L0 6M6 6L8 4L10 6" fill="#dfe2e5" stroke="#666a71" strokeWidth="1.500" />
      {bulb(15, 9)}
    </g>
  )],
  ["裁剪", <g>{cropMark}{redX}</g>],
  ["裁剪区域", <g>{cropMark}{bulb(16, 7)}</g>],
  ["锁定视图", (
    <g>
      <path d="M2 9L8 2L15 4L18 10V16H8L2 15zM8 2L12 9V16" fill="#e2e4e6" stroke="#5b5f66" strokeWidth="1.500" />
      <rect x="11" y="12" width="7" height="5" fill="#7fc3a4" stroke="#33684f" />
      <path d="M12.500 12V9H16" stroke="#33684f" />
    </g>
  )],
  ["临时隐藏", (
    <g stroke="#5b5f66" strokeWidth="1.500">
      <path d="M1 5L5 9M19 3Q19 1 15 3M9 12L11 11" />
      <ellipse cx="6.500" cy="12" rx="3.500" ry="3" fill="#e6f0f8" />
      <ellipse cx="14" cy="10" rx="3.500" ry="3" fill="#e6f0f8" />
    </g>
  )],
  ["显示隐藏", <g>{bulb(10, 8)}</g>],
  ["临时视图属性", (
    <g stroke="#3f4247" strokeWidth="1.500">
      <rect x="2" y="5" width="16" height="12" fill="#e6e7e8" />
      <path d="M4 3V5M8 3V5M12 3V5M16 3V5M4 17V19M8 17V19" strokeWidth="2" />
      <circle cx="14" cy="12" r="3" fill="#fff" />
    </g>
  )],
  ["分析模型", (
    <g>
      <path d="M2 6L6 2H13V9L9 13M2 6H9V17M2 6V17M9 6L13 2M2 11H9M5 6V17" stroke="#5b5f66" strokeWidth="1.500" />
      <path d="M2 12V18M6 12V18M2 14H9" stroke="#c23a30" strokeWidth="1.500" />
      {bulb(15, 8)}
    </g>
  )],
  ["位移集", (
    <g stroke="#5b5f66" strokeWidth="1.500">
      <path d="M5 6L9 2H18V12L14 15M1 9H5V15H1zM9 6V2M13 7L18 2" fill="#c9ccd0" />
      <path d="M5 7H13V17H5z" fill="#eff0f1" />
    </g>
  )],
  ["显示约束", (
    <g stroke="#5b5f66" strokeWidth="1.500">
      <path d="M2 1V18M18 1V9M2 5H18M5 3L2 5L5 7M15 3L18 5L15 7M2 15H10" />
      <rect x="12" y="12" width="7" height="5" fill="#8b8f95" />
      <path d="M13.500 12V9.500H17.500V12" />
    </g>
  )],
];

const pointer = <path d="M9 7V18L12 15.500L14 19.500L16 18.500L14.500 14.500H18z" fill="#fff" stroke="#333" />;

const rightArt: [string, React.ReactNode][] = [
  ["选择链接", (
    <g>
      <rect x="1.500" y="2" width="7" height="6" rx="3" fill="#f7dc83" stroke="#d69a14" strokeWidth="3" />
      <rect x="10.500" y="2" width="7" height="6" rx="3" fill="#f7dc83" stroke="#d69a14" strokeWidth="3" />
      {pointer}
    </g>
  )],
  ["选择基线图元", (
    <g>
      <path d="M1 9L6 2H18L14 9zM1 15L5 10H14L11 15z" fill="#e3f1fb" stroke="#2f7fc1" strokeWidth="1.500" />
      {pointer}
    </g>
  )],
  ["选择锁定图元", (
    <g>
      <path d="M3 1H13V4H11V8L14 12H2L5 8V4H3z" fill="#e9793a" stroke="#a8441a" />
      <path d="M5 5H11" stroke="#f8c7a4" strokeWidth="1.500" />
      <path d="M7.500 12V18" stroke="#555" strokeWidth="1.500" />
      {pointer}
    </g>
  )],
  ["按面选择图元", (
    <g>
      <path d="M3 5L12 1V15L3 18z" fill="#9fd0f1" stroke="#2f7fc1" strokeWidth="1.500" />
      {pointer}
    </g>
  )],
  ["选择时拖曳", (
    <g>
      <path d="M6 1V12M0 6.500H12M4 3L6 1L8 3M4 10L6 12L8 10M2 4.500L0 6.500L2 8.500M10 4.500L12 6.500L10 8.500" stroke="#222" />
      {pointer}
    </g>
  )],
  ["后台进程", (
    <circle cx="10" cy="10" r="6" stroke="#a3a3a3" strokeWidth="4" strokeDasharray="3 1" />
  )],
  ["过滤器", (
    <path d="M1.500 2.500H18.500L12 10V18H8V10z" fill="#aeb2b8" stroke="#4f535a" strokeWidth="1.500" />
  )],
];

const tabs = ["结构", "系统", "插入", "注释", "分析", "体量和场地", "协作", "视图", "管理", "附加模块", "修改"];

export default function App() {
  return (
    <>
      <Global />
      <Frame>
        <TabStrip>
          <Tab $kind="file">文件</Tab>
          <Tab $kind="active">建筑</Tab>
          {tabs.map((t) => (
            <Tab key={t}>{t}</Tab>
          ))}
          <RibbonToggle aria-label="ribbon">
            <svg width="19" height="12" viewBox="0 0 19 12" fill="none" aria-hidden="true">
              <rect x="1" y="1" width="17" height="10" rx="3" fill="#eee" stroke="#555" strokeWidth="1.500" />
              <path d="M6 8L9.500 4L13 8z" fill="#444" />
            </svg>
            <Caret />
          </RibbonToggle>
        </TabStrip>

        <Ribbon>
          <Panel>
            <PanelBody>
              <ModifyTool $w={47}>
                <Art size={40}>{toolArt.modify}</Art>
                <ToolLabel>
                  <span>修改</span>
                </ToolLabel>
              </ModifyTool>
            </PanelBody>
            <PanelTitle>
              选择
              <Caret $size={4} />
            </PanelTitle>
          </Panel>
          {panels.map((p) => (
            <Panel key={p.title}>
              <PanelBody>
                {p.tools.map((t) => (
                  <RibbonTool key={t[0]} def={t} />
                ))}
              </PanelBody>
              <PanelTitle>
                {p.title}
                {p.menu && <Caret $size={4} />}
              </PanelTitle>
            </Panel>
          ))}
        </Ribbon>

        <Workspace>
          <Palette $w={341} $gap={4}>
            <PaletteTitle>
              属性
              <CloseButton aria-label="关闭属性">
                <CloseX />
              </CloseButton>
            </PaletteTitle>
            <TypeBox>
              <TypePreview>
                <House />
              </TypePreview>
              <span>三维视图</span>
              <Caret $size={4} />
            </TypeBox>
            <InstanceRow>
              <SelectWrap $w={244} $h={28}>
                <Select aria-label="实例">
                  <option>三维视图: {"{三维}"}</option>
                </Select>
                <Chevron size={12} />
              </SelectWrap>
              <EditType>
                <TypeIcon />
                编辑类型
              </EditType>
            </InstanceRow>
            <GridArea>
              <GridClip>
                <PropTable>
                  <colgroup>
                    <col width="151" />
                    <col />
                    <col width="15" />
                  </colgroup>
                  <tbody>
                    {groups.map((g, gi) => (
                      <React.Fragment key={g.title}>
                        <tr>
                          <GroupCell colSpan={3} scope="colgroup">
                            <div>
                              {g.title}
                              <Collapse />
                            </div>
                          </GroupCell>
                        </tr>
                        {g.rows.map((r, ri) => (
                          <PropertyRow key={r.name} row={r} id={`prop-${gi}-${ri}`} />
                        ))}
                      </React.Fragment>
                    ))}
                  </tbody>
                </PropTable>
              </GridClip>
              <ScrollBar>
                <Chevron up />
                <ScrollThumb />
                <Chevron />
              </ScrollBar>
            </GridArea>
            <PaletteFooter>
              <HelpLink href="#help">属性帮助</HelpLink>
              <ApplyButton disabled>应用</ApplyButton>
            </PaletteFooter>
          </Palette>

          <Palette $w={212} $gap={5}>
            <PaletteTitle $pad={4}>
              项目浏览器 - 项目1
              <CloseButton aria-label="关闭项目浏览器">
                <CloseX />
              </CloseButton>
            </PaletteTitle>
            <TreeBox>
              {treeRows.map((r) => (
                <TreeRow key={r.text}>
                  {r.guides.map((g, i) => (g ? <GuideCell key={i} kind={g} /> : <GuideGap key={i} />))}
                  {r.art && <Art size={20}>{treeArt[r.art]}</Art>}
                  <TreeLabel $sel={r.sel}>{r.text}</TreeLabel>
                </TreeRow>
              ))}
            </TreeBox>
          </Palette>

          <View>
            <Canvas>
              <svg viewBox="0 0 1281 816" preserveAspectRatio="xMidYMid meet" aria-hidden="true">
                <g stroke="#000" strokeWidth="1" shapeRendering="crispEdges">
                  <path d="M390.500 406.500L651.500 256.500H681.500L941.500 406.500z" fill="#58585a" />
                  <path d="M390.500 406.500H941.500V559.500H390.500z" fill="#545454" />
                  <path d="M390.500 406.500H941.500V417.500H390.500z" fill="#5a5a5c" />
                  <path d="M390.500 546.500H941.500" />
                </g>
              </svg>
              <ViewCube>
                <CubeFace>前</CubeFace>
                <svg width="112" height="14" viewBox="0 0 112 14" fill="none" aria-hidden="true">
                  <path d="M42 1H102L108 5H38z" fill="#d2d4d4" />
                  <path d="M0 3Q40 0 62 1M22 4Q50 10 112 9M8 4Q40 9 60 9M100 1L112 2" stroke="#cfe3e6" strokeDasharray="6 2" />
                  <path d="M2 3L10 2M14 3H22M62 9H84" stroke="#aaa0a0" strokeWidth="2" strokeDasharray="4 1" />
                </svg>
              </ViewCube>
            </Canvas>
            <ViewBar>
              <ScaleText>1 : 100</ScaleText>
              {barArt.map(([name, art]) => (
                <BarButton key={name} aria-label={name}>
                  <Art size={20}>{art}</Art>
                </BarButton>
              ))}
              <BarButton aria-label="收起">
                <svg width="12" height="14" viewBox="0 0 12 14" fill="none" stroke="#222" strokeWidth="1.500" aria-hidden="true">
                  <path d="M8 3L3 7L8 11" />
                </svg>
              </BarButton>
              <HTrack>
                <HThumb />
              </HTrack>
            </ViewBar>
          </View>
        </Workspace>

        <StatusBar>
          <StatusText>
            单击可进行选择; 按 Tab 键并单击可选择其他项目; 按 Ctrl 键并单击可将新项目添加到选择集; 按 Shift 键并单击可
          </StatusText>
          <StatusGroup $ml={0} $gap={7}>
            <Art size={20}>
              <g stroke="#8b8b8b" strokeWidth="1.500">
                <path d="M6 3H14V7H6zM10 7V10M2 10H7V19H2zM8 10H12V19H8zM13 10H18V19H13z" fill="#c2c2c2" />
                <path d="M8 3L10 1L12 3" />
              </g>
            </Art>
            <SelectWrap $w={254} $h={24} $light>
              <Select $light aria-label="工作集" disabled>
                <option></option>
              </Select>
              <Chevron color="#b0b0b0" size={12} />
            </SelectWrap>
          </StatusGroup>
          <StatusGroup $ml={9} $gap={4}>
            <Art size={22}>
              <path d="M7 2H17V8H12L10 11L11 14H4V19H9" fill="#f0f0f0" stroke="#8b8b8b" strokeWidth="1.500" />
              <path d="M3 14H8V19H3z" fill="#9a9a9a" />
            </Art>
            :0
          </StatusGroup>
          <StatusGroup $ml={22} $gap={9}>
            <Art size={20}>
              <rect x="1" y="1" width="18" height="18" fill="#fafafa" stroke="#2c3542" strokeWidth="1.500" />
              <path d="M1 1H19V4H1zM3 6H6V8H3zM8 6H16V8H8zM6 11H8V12H6zM10 11H16V12H10zM6 15H8V16H6zM10 15H16V16H10z" fill="#2c3542" />
            </Art>
            <Art size={20}>
              <path d="M2 1H19V18H10V12H2z" fill="#989898" />
              <path d="M1 13H6V10L11 15L6 19V16H1z" fill="#ececec" stroke="#8b8b8b" />
            </Art>
            <SelectWrap $w={255} $h={24} $light>
              <Select $light aria-label="设计选项" disabled>
                <option>主模型</option>
              </Select>
              <Chevron color="#b0b0b0" size={12} />
            </SelectWrap>
          </StatusGroup>
          <StatusRight>
            <StatusGroup $ml={0} $gap={10}>
              {rightArt.map(([name, art]) => (
                <BarButton key={name} aria-label={name}>
                  <Art size={20}>{art}</Art>
                </BarButton>
              ))}
            </StatusGroup>
            :0
          </StatusRight>
        </StatusBar>
      </Frame>
    </>
  );
}
